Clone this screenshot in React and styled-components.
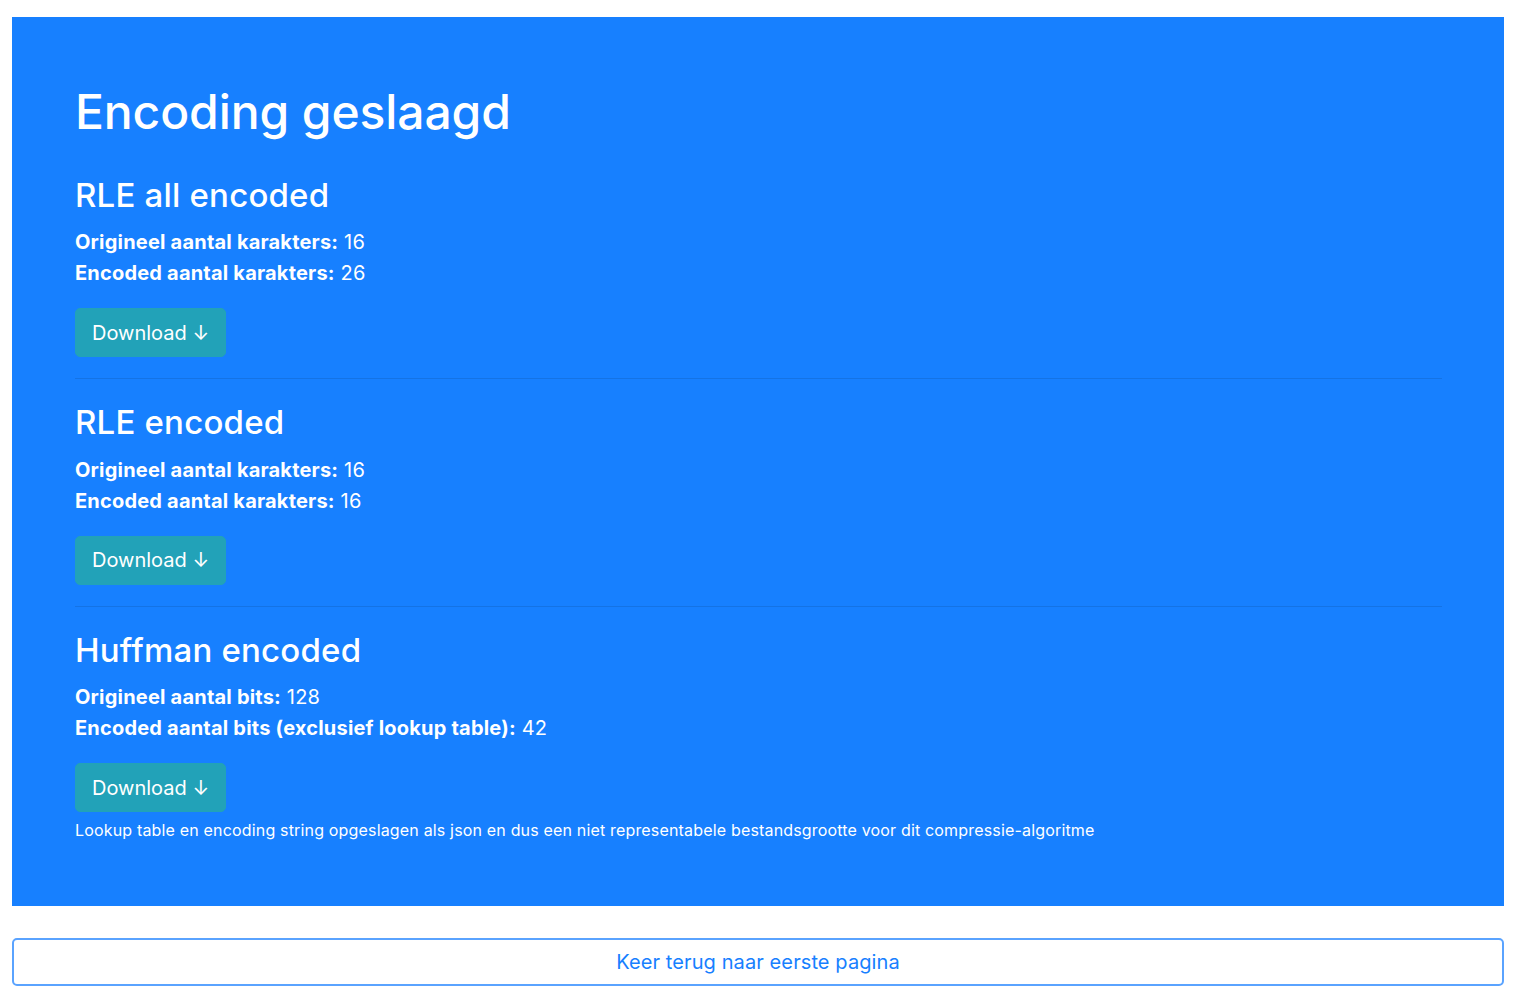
import React from "react";
import styled, { createGlobalStyle } from "styled-components";

const Global = createGlobalStyle`
  html, body { margin: 0; padding: 0; background: #fff; }
  body {
    font-family: Inter, "Noto Sans", "Liberation Sans", sans-serif;
    color: #212529;
    -webkit-font-smoothing: antialiased;
  }
  * { box-sizing: border-box; }
`;

const Page = styled.div`
  padding: 17px 16px 16px 12px;
`;

const Panel = styled.section`
  background: #1780ff;
  color: #fff;
  padding: 66px 62px 64px 63px;
  margin-bottom: 32px;
`;

const Title = styled.h1`
  margin: 0 0 35px;
  font-size: 48px;
  line-height: 1.2;
  font-weight: 500;
  letter-spacing: -0.1px;
`;

const Heading = styled.h2`
  margin: 0 0 12px;
  font-size: 33px;
  line-height: 1.2;
  font-weight: 500;
  letter-spacing: 0.2px;
`;

const Stats = styled.div`
  font-size: 20px;
  line-height: 31px;
  margin-bottom: 19px;
  letter-spacing: 0.2px;
`;

const Label = styled.strong`
  font-weight: 700;
`;

const InfoButton = styled.button`
  display: inline-flex;
  align-items: center;
  gap: 8px;
  height: 49px;
  padding: 0 16px;
  border: 1px solid #22a2b8;
  border-radius: 5px;
  background: #22a2b8;
  color: #fff;
  font-family: inherit;
  font-size: 20px;
  letter-spacing: 0;
  cursor: pointer;
`;

const Divider = styled.hr`
  margin: 21px 0 24px;
  border: 0;
  border-top: 1px solid rgba(0, 0, 0, 0.1);
`;

const Note = styled.p`
  margin: 6px 0 0;
  font-size: 16px;
  line-height: 24px;
  letter-spacing: 0.17px;
`;

const BackButton = styled.button`
  display: block;
  width: 100%;
  height: 48px;
  border: 2px solid #5aa3ff;
  border-radius: 5px;
  background: #fff;
  color: #1780ff;
  font-family: inherit;
  font-size: 20px;
  letter-spacing: 0.1px;
  cursor: pointer;
`;

const sections = [
  {
    title: "RLE all encoded",
    rows: [
      ["Origineel aantal karakters:", "16"],
      ["Encoded aantal karakters:", "26"],
    ],
  },
  {
    title: "RLE encoded",
    rows: [
      ["Origineel aantal karakters:", "16"],
      ["Encoded aantal karakters:", "16"],
    ],
  },
  {
    title: "Huffman encoded",
    rows: [
      ["Origineel aantal bits:", "128"],
      ["Encoded aantal bits (exclusief lookup table):", "42"],
    ],
    note:
      "Lookup table en encoding string opgeslagen als json en dus een niet representabele bestandsgrootte voor dit compressie-algoritme",
  },
];

export default function App() {
  return (
    <Page>
      <Global />
      <Panel>
        <Title>Encoding geslaagd</Title>
        {sections.map((s, i) => (
          <React.Fragment key={s.title}>
            {i > 0 && <Divider />}
            <Heading>{s.title}</Heading>
            <Stats>
              {s.rows.map(([l, v]) => (
                <div key={l}>
                  <Label>{l}</Label> {v}
                </div>
              ))}
            </Stats>
            <InfoButton>Download ↓</InfoButton>
            {s.note && <Note>{s.note}</Note>}
          </React.Fragment>
        ))}
      </Panel>
      <BackButton>Keer terug naar eerste pagina</BackButton>
    </Page>
  );
}
